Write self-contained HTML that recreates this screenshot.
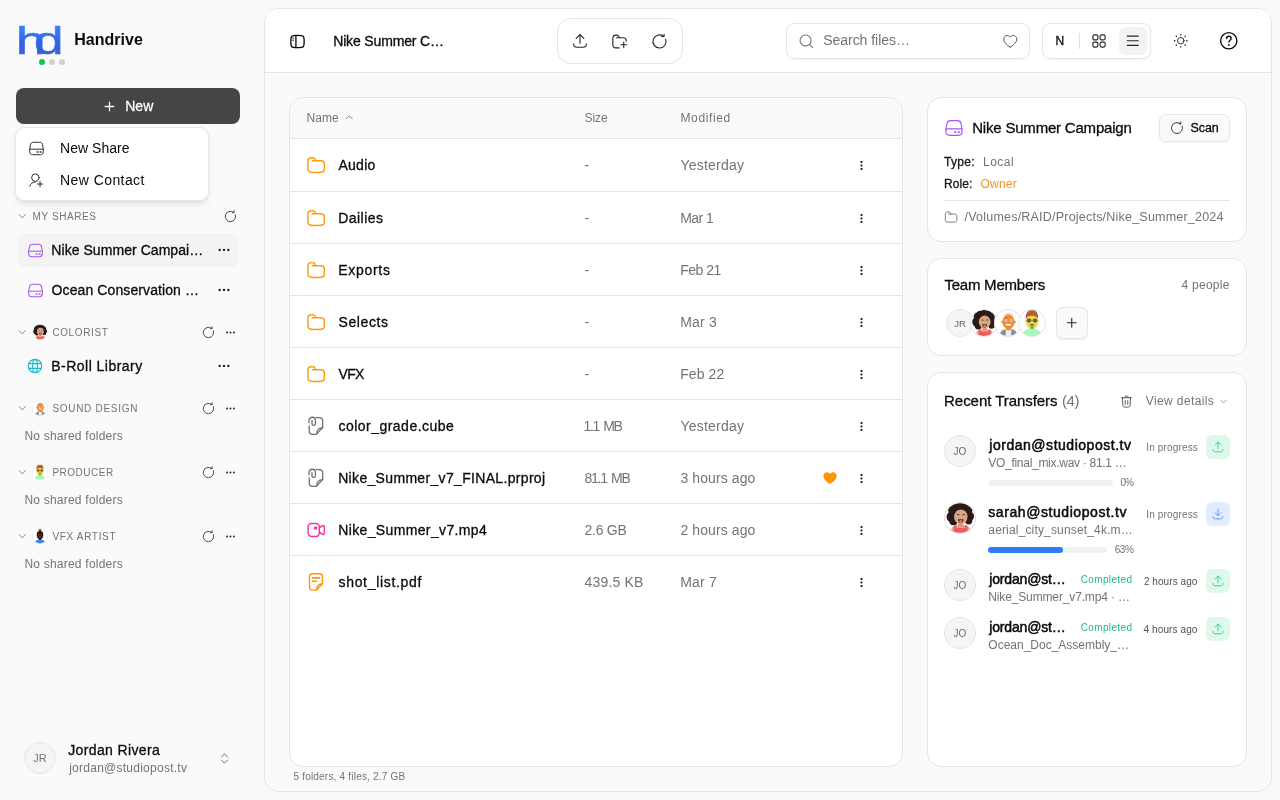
<!DOCTYPE html>
<html lang="en"><head><meta charset="utf-8"><title>Handrive</title>
<style>
*{box-sizing:border-box;margin:0;padding:0}
html,body{width:1280px;height:800px;overflow:hidden}
body{background:#fafafa;font-family:"Liberation Sans",sans-serif;color:#0a0a0a;position:relative;-webkit-font-smoothing:antialiased}
#app{position:absolute;left:0;top:0;width:1280px;height:800px;will-change:transform}
.abs{position:absolute}
.t{position:absolute;white-space:nowrap;line-height:20px;height:20px}
.m{-webkit-text-stroke:.3px currentColor}
.sb{-webkit-text-stroke:.5px currentColor}
.l{-webkit-text-stroke:.15px currentColor}
.g{color:#737373}
.card{position:absolute;background:#fff;border:1px solid #e5e5e5;border-radius:14px}
.hl{position:absolute;height:1px;background:#e5e5e5}
.circ{position:absolute;border-radius:50%;background:#f5f5f5;border:1px solid #e5e5e5;color:#737373;text-align:center}
</style></head>
<body>
<div id="app">
<header id="topbar">
<div class="abs" style="left:264px;top:8px;width:1008px;height:784px;border-radius:14px;border:1px solid #e5e5e5;background:#fafafa;overflow:hidden"><div style="height:64px;background:#fff;border-bottom:1px solid #e5e5e5"></div></div>
<svg width="17" height="17" viewBox="0 0 24 24" fill="none" stroke="#0a0a0a" stroke-width="1.85" stroke-linecap="round" stroke-linejoin="round" style="position:absolute;left:288.5px;top:32.5px;color:#0a0a0a;"><path d="M12 3.3c5.2 0 7 .2 8.1 1.3 1.1 1.1 1.3 2.9 1.3 7.4s-.2 6.3-1.3 7.4c-1.1 1.1-2.9 1.3-8.1 1.3s-7-.2-8.1-1.3C2.8 18.3 2.6 16.5 2.6 12s.2-6.3 1.3-7.4C5 3.5 6.8 3.3 12 3.3z"/><path d="M9.75 3.5v17"/><path d="M5.5 7.1h.5M5.5 10.1h.5" stroke-width="1.8"/></svg>
<span class="t m" style="top:31px;font-size:14px;left:333.2px;color:#0a0a0a;letter-spacing:-0.153px;">Nike Summer C…</span>
<div class="abs" style="left:557px;top:18px;width:126px;height:46px;border-radius:14px;border:1px solid #e5e5e5;background:#fff"></div>
<svg width="18" height="18" viewBox="0 0 24 24" fill="none" stroke="#262626" stroke-width="1.5" stroke-linecap="round" stroke-linejoin="round" style="position:absolute;left:571px;top:32.3px;color:#262626;"><path d="M12 15V3.5"/><path d="M6.8 8.6L12 3.4l5.2 5.2"/><path d="M3.5 16C3.5 19 5 20.3 8 20.3H16C19 20.3 20.5 19 20.5 16"/></svg>
<svg width="17" height="17" viewBox="0 0 24 24" fill="none" stroke="#262626" stroke-width="1.55" stroke-linecap="round" stroke-linejoin="round" style="position:absolute;left:611.2px;top:32.5px;color:#262626;"><path d="M11.5 21H7c-3 0-4.4-1.4-4.4-4.4V7.4C2.6 4.4 4 3 7 3h1.3c1 0 1.6.300 2.1 1.1l1.3 2.4"/><path d="M7.5 6.6h9.8c2.8 0 4.2 1.4 4.2 4.2v.700"/><path d="M18 12.6v8M14 16.6h8"/></svg>
<svg width="19" height="19" viewBox="0 0 24 24" fill="none" stroke="#262626" stroke-width="1.4" stroke-linecap="round" stroke-linejoin="round" style="position:absolute;left:650.3px;top:31.5px;color:#262626;"><path d="M19.8 9.16A8.3 8.3 0 1 1 17 5.35"/><path d="M17.7 2.8l.200 2.9-2.9.200"/></svg>
<div class="abs" style="left:786px;top:23px;width:244px;height:36px;border-radius:8px;border:1px solid #e5e5e5;background:#fff;box-shadow:0 1px 2px rgba(0,0,0,.04)"></div>
<svg width="16.5" height="16.5" viewBox="0 0 24 24" fill="none" stroke="#6e6e6e" stroke-width="1.5" stroke-linecap="round" stroke-linejoin="round" style="position:absolute;left:797.7px;top:32.85px;color:#6e6e6e;"><circle cx="11" cy="11" r="8"/><path d="M17 17l4.3 4.3"/></svg>
<span class="t " style="top:30px;font-size:14px;left:823.2px;color:#737373;letter-spacing:-0.029px;">Search files…</span>
<svg width="16.5" height="16.5" viewBox="0 0 24 24" fill="none" stroke="#525252" stroke-width="1.4" stroke-linecap="round" stroke-linejoin="round" style="position:absolute;left:1001.75px;top:33.05px;color:#525252;"><path d="M12 20.7C5.5 16.3 2.5 12.8 2.5 8.9 2.5 5.8 4.8 3.6 7.6 3.6c1.8 0 3.4.9 4.4 2.5 1-1.6 2.6-2.5 4.4-2.5 2.8 0 5.1 2.2 5.1 5.3 0 3.9-3 7.4-9.5 11.8z"/></svg>
<div class="abs" style="left:1042px;top:23px;width:109px;height:36px;border-radius:8px;border:1px solid #e5e5e5;background:#fff;box-shadow:0 1px 2px rgba(0,0,0,.04)"></div>
<span class="t m" style="top:31px;font-size:12px;left:1055.6px;color:#0a0a0a;letter-spacing:0.2px;">N</span>
<div class="abs" style="left:1079px;top:33px;width:1px;height:16px;background:#e0e0e0"></div>
<svg width="16" height="16" viewBox="0 0 24 24" fill="none" stroke="#262626" stroke-width="1.7" stroke-linecap="round" stroke-linejoin="round" style="position:absolute;left:1091px;top:33px;color:#262626;"><rect x="2.8" y="2.8" width="7.6" height="7.6" rx="2.3"/><rect x="13.6" y="2.8" width="7.6" height="7.6" rx="2.3"/><rect x="2.8" y="13.6" width="7.6" height="7.6" rx="2.3"/><rect x="13.6" y="13.6" width="7.6" height="7.6" rx="2.3"/></svg>
<div class="abs" style="left:1119px;top:27px;width:28px;height:28px;border-radius:6px;background:#f3f3f3"></div>
<svg width="15.5" height="15.5" viewBox="0 0 24 24" fill="none" stroke="#262626" stroke-width="1.9" stroke-linecap="round" stroke-linejoin="round" style="position:absolute;left:1125.45px;top:33.25px;color:#262626;"><path d="M3.5 5h17M3.5 12h17M3.5 19h17"/></svg>
<svg width="15.5" height="15.5" viewBox="0 0 24 24" fill="none" stroke="#262626" stroke-width="1.5" stroke-linecap="round" stroke-linejoin="round" style="position:absolute;left:1173.05px;top:33.25px;color:#262626;"><circle cx="12" cy="12" r="5"/><path d="M12 2.2v.6M12 21.2v.6M2.2 12h.6M21.2 12h.6M5 5l.4.4M18.6 18.6l.4.4M19 5l-.4.4M5.4 18.6l-.4.4" stroke-width="2"/></svg>
<svg width="19.5" height="19.5" viewBox="0 0 24 24" fill="none" stroke="#0a0a0a" stroke-width="1.7" stroke-linecap="round" stroke-linejoin="round" style="position:absolute;left:1219.15px;top:31.049999999999997px;color:#0a0a0a;"><circle cx="12" cy="12" r="10"/><path d="M9.3 9.3c0-1.6 1.2-2.8 2.8-2.8s2.8 1.1 2.8 2.6c0 2.2-2.7 2.2-2.7 4.4"/><path d="M12.1 17.2v.1" stroke-width="2.2"/></svg>
</header>
<main id="files">
<div class="card" style="left:289px;top:97px;width:614px;height:670px;border-radius:14px;overflow:hidden"><div style="height:41px;background:#fafafa;border-bottom:1px solid #e5e5e5"></div></div>
<span class="t " style="top:107.5px;font-size:12px;left:306.5px;color:#737373;letter-spacing:0.055px;">Name</span>
<svg width="10.5" height="10.5" viewBox="0 0 24 24" fill="none" stroke="#737373" stroke-width="1.9" stroke-linecap="round" stroke-linejoin="round" style="position:absolute;left:343.75px;top:112.25px;color:#737373;"><path d="M5 15.5l7-7 7 7"/></svg>
<span class="t " style="top:107.5px;font-size:12px;left:584.5px;color:#737373;letter-spacing:-0.057px;">Size</span>
<span class="t " style="top:107.5px;font-size:12px;left:680.5px;color:#737373;letter-spacing:0.617px;">Modified</span>
<div class="hl" style="left:290px;top:191px;width:612px"></div>
<svg width="20" height="20" viewBox="0 0 24 24" fill="none" stroke="#ff9a0c" stroke-width="1.7" stroke-linecap="round" stroke-linejoin="round" style="position:absolute;left:306.1px;top:155px;color:#ff9a0c;"><path d="M7.7 6.9H18C20.7 6.9 22 8.2 22 10.9V16.8C22 19.5 20.7 20.6 18 20.7 14 21 10 21 6.3 20.7 3.6 20.5 2.3 19.5 2.3 16.8V7.2C2.3 4.5 3.6 3.2 6.3 3.2H8.6C9.4 3.2 9.9 3.5 10.3 4.2L11.8 6.9"/></svg>
<span class="t m" style="top:155px;font-size:14px;left:338.5px;color:#0a0a0a;letter-spacing:0.245px;">Audio</span>
<span class="t " style="top:155px;font-size:14px;left:584.5px;color:#737373;">-</span>
<span class="t " style="top:155px;font-size:14px;left:680.5px;color:#737373;letter-spacing:0.219px;">Yesterday</span>
<svg width="13" height="13" viewBox="0 0 24 24" fill="none" stroke="#171717" stroke-width="1.5" stroke-linecap="round" stroke-linejoin="round" style="position:absolute;left:855.4px;top:158.5px;color:#171717;"><rect x="10.3" y="3.8" width="3.4" height="3.4" rx=".6" fill="currentColor" stroke="none"/><rect x="10.3" y="10.3" width="3.4" height="3.4" rx=".6" fill="currentColor" stroke="none"/><rect x="10.3" y="16.8" width="3.4" height="3.4" rx=".6" fill="currentColor" stroke="none"/></svg>
<div class="hl" style="left:290px;top:243px;width:612px"></div>
<svg width="20" height="20" viewBox="0 0 24 24" fill="none" stroke="#ff9a0c" stroke-width="1.7" stroke-linecap="round" stroke-linejoin="round" style="position:absolute;left:306.1px;top:208px;color:#ff9a0c;"><path d="M7.7 6.9H18C20.7 6.9 22 8.2 22 10.9V16.8C22 19.5 20.7 20.6 18 20.7 14 21 10 21 6.3 20.7 3.6 20.5 2.3 19.5 2.3 16.8V7.2C2.3 4.5 3.6 3.2 6.3 3.2H8.6C9.4 3.2 9.9 3.5 10.3 4.2L11.8 6.9"/></svg>
<span class="t m" style="top:208px;font-size:14px;left:338.2px;color:#0a0a0a;letter-spacing:0.464px;">Dailies</span>
<span class="t " style="top:208px;font-size:14px;left:584.5px;color:#737373;">-</span>
<span class="t " style="top:208px;font-size:14px;left:680.2px;color:#737373;letter-spacing:-0.55px;">Mar 1</span>
<svg width="13" height="13" viewBox="0 0 24 24" fill="none" stroke="#171717" stroke-width="1.5" stroke-linecap="round" stroke-linejoin="round" style="position:absolute;left:855.4px;top:211.5px;color:#171717;"><rect x="10.3" y="3.8" width="3.4" height="3.4" rx=".6" fill="currentColor" stroke="none"/><rect x="10.3" y="10.3" width="3.4" height="3.4" rx=".6" fill="currentColor" stroke="none"/><rect x="10.3" y="16.8" width="3.4" height="3.4" rx=".6" fill="currentColor" stroke="none"/></svg>
<div class="hl" style="left:290px;top:295px;width:612px"></div>
<svg width="20" height="20" viewBox="0 0 24 24" fill="none" stroke="#ff9a0c" stroke-width="1.7" stroke-linecap="round" stroke-linejoin="round" style="position:absolute;left:306.1px;top:260px;color:#ff9a0c;"><path d="M7.7 6.9H18C20.7 6.9 22 8.2 22 10.9V16.8C22 19.5 20.7 20.6 18 20.7 14 21 10 21 6.3 20.7 3.6 20.5 2.3 19.5 2.3 16.8V7.2C2.3 4.5 3.6 3.2 6.3 3.2H8.6C9.4 3.2 9.9 3.5 10.3 4.2L11.8 6.9"/></svg>
<span class="t m" style="top:260px;font-size:14px;left:338.2px;color:#0a0a0a;letter-spacing:0.723px;">Exports</span>
<span class="t " style="top:260px;font-size:14px;left:584.5px;color:#737373;">-</span>
<span class="t " style="top:260px;font-size:14px;left:680.2px;color:#737373;letter-spacing:-0.5px;">Feb 21</span>
<svg width="13" height="13" viewBox="0 0 24 24" fill="none" stroke="#171717" stroke-width="1.5" stroke-linecap="round" stroke-linejoin="round" style="position:absolute;left:855.4px;top:263.5px;color:#171717;"><rect x="10.3" y="3.8" width="3.4" height="3.4" rx=".6" fill="currentColor" stroke="none"/><rect x="10.3" y="10.3" width="3.4" height="3.4" rx=".6" fill="currentColor" stroke="none"/><rect x="10.3" y="16.8" width="3.4" height="3.4" rx=".6" fill="currentColor" stroke="none"/></svg>
<div class="hl" style="left:290px;top:347px;width:612px"></div>
<svg width="20" height="20" viewBox="0 0 24 24" fill="none" stroke="#ff9a0c" stroke-width="1.7" stroke-linecap="round" stroke-linejoin="round" style="position:absolute;left:306.1px;top:312px;color:#ff9a0c;"><path d="M7.7 6.9H18C20.7 6.9 22 8.2 22 10.9V16.8C22 19.5 20.7 20.6 18 20.7 14 21 10 21 6.3 20.7 3.6 20.5 2.3 19.5 2.3 16.8V7.2C2.3 4.5 3.6 3.2 6.3 3.2H8.6C9.4 3.2 9.9 3.5 10.3 4.2L11.8 6.9"/></svg>
<span class="t m" style="top:312px;font-size:14px;left:338.5px;color:#0a0a0a;letter-spacing:0.598px;">Selects</span>
<span class="t " style="top:312px;font-size:14px;left:584.5px;color:#737373;">-</span>
<span class="t " style="top:312px;font-size:14px;left:680.2px;color:#737373;letter-spacing:0.2px;">Mar 3</span>
<svg width="13" height="13" viewBox="0 0 24 24" fill="none" stroke="#171717" stroke-width="1.5" stroke-linecap="round" stroke-linejoin="round" style="position:absolute;left:855.4px;top:315.5px;color:#171717;"><rect x="10.3" y="3.8" width="3.4" height="3.4" rx=".6" fill="currentColor" stroke="none"/><rect x="10.3" y="10.3" width="3.4" height="3.4" rx=".6" fill="currentColor" stroke="none"/><rect x="10.3" y="16.8" width="3.4" height="3.4" rx=".6" fill="currentColor" stroke="none"/></svg>
<div class="hl" style="left:290px;top:399px;width:612px"></div>
<svg width="20" height="20" viewBox="0 0 24 24" fill="none" stroke="#ff9a0c" stroke-width="1.7" stroke-linecap="round" stroke-linejoin="round" style="position:absolute;left:306.1px;top:364px;color:#ff9a0c;"><path d="M7.7 6.9H18C20.7 6.9 22 8.2 22 10.9V16.8C22 19.5 20.7 20.6 18 20.7 14 21 10 21 6.3 20.7 3.6 20.5 2.3 19.5 2.3 16.8V7.2C2.3 4.5 3.6 3.2 6.3 3.2H8.6C9.4 3.2 9.9 3.5 10.3 4.2L11.8 6.9"/></svg>
<span class="t m" style="top:364px;font-size:14px;left:338.5px;color:#0a0a0a;letter-spacing:-0.695px;">VFX</span>
<span class="t " style="top:364px;font-size:14px;left:584.5px;color:#737373;">-</span>
<span class="t " style="top:364px;font-size:14px;left:680.2px;color:#737373;letter-spacing:0.1px;">Feb 22</span>
<svg width="13" height="13" viewBox="0 0 24 24" fill="none" stroke="#171717" stroke-width="1.5" stroke-linecap="round" stroke-linejoin="round" style="position:absolute;left:855.4px;top:367.5px;color:#171717;"><rect x="10.3" y="3.8" width="3.4" height="3.4" rx=".6" fill="currentColor" stroke="none"/><rect x="10.3" y="10.3" width="3.4" height="3.4" rx=".6" fill="currentColor" stroke="none"/><rect x="10.3" y="16.8" width="3.4" height="3.4" rx=".6" fill="currentColor" stroke="none"/></svg>
<div class="hl" style="left:290px;top:451px;width:612px"></div>
<svg width="20" height="20" viewBox="0 0 24 24" fill="none" stroke="#6e6e6e" stroke-width="1.55" stroke-linecap="round" stroke-linejoin="round" style="position:absolute;left:306px;top:416px;color:#6e6e6e;"><path d="M12.5 1.9H16C18.7 1.9 20 3.2 20 5.9V13.9L12.9 21.5C12.6 21.8 12.2 22 11.6 22H7.8C5.2 22 3.9 20.7 3.9 18.1V12"/><path d="M20 14C15.5 14.3 13 16 12.9 21.5"/><path d="M3.6 8.2V5.3C3.6 2.9 5.2 1.5 7.45 1.5S11.3 2.9 11.3 5.3V9.2C11.3 10.5 10.5 11.3 9.25 11.3S7.2 10.5 7.2 9.2V5.3"/></svg>
<span class="t m" style="top:416px;font-size:14px;left:338.5px;color:#0a0a0a;letter-spacing:0.473px;">color_grade.cube</span>
<span class="t " style="top:416px;font-size:14px;left:583.5px;color:#737373;letter-spacing:-1.363px;word-spacing:1.8px;">1.1 MB</span>
<span class="t " style="top:416px;font-size:14px;left:680.5px;color:#737373;letter-spacing:0.219px;">Yesterday</span>
<svg width="13" height="13" viewBox="0 0 24 24" fill="none" stroke="#171717" stroke-width="1.5" stroke-linecap="round" stroke-linejoin="round" style="position:absolute;left:855.4px;top:419.5px;color:#171717;"><rect x="10.3" y="3.8" width="3.4" height="3.4" rx=".6" fill="currentColor" stroke="none"/><rect x="10.3" y="10.3" width="3.4" height="3.4" rx=".6" fill="currentColor" stroke="none"/><rect x="10.3" y="16.8" width="3.4" height="3.4" rx=".6" fill="currentColor" stroke="none"/></svg>
<div class="hl" style="left:290px;top:503px;width:612px"></div>
<svg width="20" height="20" viewBox="0 0 24 24" fill="none" stroke="#6e6e6e" stroke-width="1.55" stroke-linecap="round" stroke-linejoin="round" style="position:absolute;left:306px;top:468px;color:#6e6e6e;"><path d="M12.5 1.9H16C18.7 1.9 20 3.2 20 5.9V13.9L12.9 21.5C12.6 21.8 12.2 22 11.6 22H7.8C5.2 22 3.9 20.7 3.9 18.1V12"/><path d="M20 14C15.5 14.3 13 16 12.9 21.5"/><path d="M3.6 8.2V5.3C3.6 2.9 5.2 1.5 7.45 1.5S11.3 2.9 11.3 5.3V9.2C11.3 10.5 10.5 11.3 9.25 11.3S7.2 10.5 7.2 9.2V5.3"/></svg>
<span class="t m" style="top:468px;font-size:14px;left:338.2px;color:#0a0a0a;letter-spacing:0.327px;">Nike_Summer_v7_FINAL.prproj</span>
<span class="t " style="top:468px;font-size:14px;left:584.5px;color:#737373;letter-spacing:-1.267px;word-spacing:1.8px;">81.1 MB</span>
<span class="t " style="top:468px;font-size:14px;left:680.5px;color:#737373;letter-spacing:0.084px;">3 hours ago</span>
<svg width="16" height="16" viewBox="0 0 24 24" fill="#ff9500" stroke="#ff9500" stroke-width="0" stroke-linecap="round" stroke-linejoin="round" style="position:absolute;left:821.8px;top:470px;color:#ff9500;"><path d="M12 21C5.5 16.6 2 12.9 2 8.9 2 5.6 4.5 3.2 7.5 3.2c1.8 0 3.4.9 4.5 2.5 1.1-1.6 2.7-2.5 4.5-2.5 3 0 5.5 2.4 5.5 5.7 0 4-3.5 7.7-10 12.1z" stroke="none"/></svg>
<svg width="13" height="13" viewBox="0 0 24 24" fill="none" stroke="#171717" stroke-width="1.5" stroke-linecap="round" stroke-linejoin="round" style="position:absolute;left:855.4px;top:471.5px;color:#171717;"><rect x="10.3" y="3.8" width="3.4" height="3.4" rx=".6" fill="currentColor" stroke="none"/><rect x="10.3" y="10.3" width="3.4" height="3.4" rx=".6" fill="currentColor" stroke="none"/><rect x="10.3" y="16.8" width="3.4" height="3.4" rx=".6" fill="currentColor" stroke="none"/></svg>
<div class="hl" style="left:290px;top:555px;width:612px"></div>
<svg width="20" height="20" viewBox="0 0 24 24" fill="none" stroke="#f5339f" stroke-width="1.7" stroke-linecap="round" stroke-linejoin="round" style="position:absolute;left:306px;top:520px;color:#f5339f;"><rect x="2.5" y="4.2" width="13.5" height="15.6" rx="4.2"/><path d="M16 9.4L19.3 7C20.8 6 22 6.6 22 8.4V15.6C22 17.4 20.8 18 19.3 17L16 14.6"/><circle cx="11.5" cy="9.6" r="1.3"/></svg>
<span class="t m" style="top:520px;font-size:14px;left:338.2px;color:#0a0a0a;letter-spacing:0.365px;">Nike_Summer_v7.mp4</span>
<span class="t " style="top:520px;font-size:14px;left:584.5px;color:#737373;letter-spacing:-0.248px;">2.6 GB</span>
<span class="t " style="top:520px;font-size:14px;left:680.5px;color:#737373;letter-spacing:0.084px;">2 hours ago</span>
<svg width="13" height="13" viewBox="0 0 24 24" fill="none" stroke="#171717" stroke-width="1.5" stroke-linecap="round" stroke-linejoin="round" style="position:absolute;left:855.4px;top:523.5px;color:#171717;"><rect x="10.3" y="3.8" width="3.4" height="3.4" rx=".6" fill="currentColor" stroke="none"/><rect x="10.3" y="10.3" width="3.4" height="3.4" rx=".6" fill="currentColor" stroke="none"/><rect x="10.3" y="16.8" width="3.4" height="3.4" rx=".6" fill="currentColor" stroke="none"/></svg>
<svg width="20" height="20" viewBox="0 0 24 24" fill="none" stroke="#ff960a" stroke-width="1.7" stroke-linecap="round" stroke-linejoin="round" style="position:absolute;left:306px;top:572px;color:#ff960a;"><path d="M8.2 2H15.8C18.5 2 19.8 3.3 19.8 6V14L12.8 21.3C12.5 21.6 12.1 21.7 11.5 21.7H8.2C5.5 21.7 4.2 20.4 4.2 17.7V6C4.2 3.3 5.5 2 8.2 2Z"/><path d="M19.8 14.1C15.5 14.4 12.9 16 12.8 21.4"/><path d="M7.6 7H16.4M7.6 11H12.8" stroke-width="1.9"/></svg>
<span class="t m" style="top:572px;font-size:14px;left:338.5px;color:#0a0a0a;letter-spacing:0.682px;">shot_list.pdf</span>
<span class="t " style="top:572px;font-size:14px;left:584.5px;color:#737373;letter-spacing:0.177px;">439.5 KB</span>
<span class="t " style="top:572px;font-size:14px;left:680.2px;color:#737373;letter-spacing:0.2px;">Mar 7</span>
<svg width="13" height="13" viewBox="0 0 24 24" fill="none" stroke="#171717" stroke-width="1.5" stroke-linecap="round" stroke-linejoin="round" style="position:absolute;left:855.4px;top:575.5px;color:#171717;"><rect x="10.3" y="3.8" width="3.4" height="3.4" rx=".6" fill="currentColor" stroke="none"/><rect x="10.3" y="10.3" width="3.4" height="3.4" rx=".6" fill="currentColor" stroke="none"/><rect x="10.3" y="16.8" width="3.4" height="3.4" rx=".6" fill="currentColor" stroke="none"/></svg>
<span class="t " style="top:766.5px;font-size:10px;left:293.4px;color:#737373;letter-spacing:0.206px;">5 folders, 4 files, 2.7 GB</span>
</main>
<section id="details">
<div class="card" style="left:927px;top:97px;width:320px;height:145px"></div>
<svg width="20" height="20" viewBox="0 0 24 24" fill="none" stroke="#a855f7" stroke-width="1.4" stroke-linecap="round" stroke-linejoin="round" style="position:absolute;left:943.7px;top:118px;color:#a855f7;"><path d="M2.4 13L3.5 6.8C4 4.3 5.4 3.2 7.8 3.2H16.2C18.6 3.2 20 4.3 20.5 6.8L21.6 13V16.6C21.6 19.4 20.2 20.8 17.4 20.8H6.6C3.8 20.8 2.4 19.4 2.4 16.6Z"/><path d="M2.4 13H21.6"/><path d="M12.9 16.9h1.2M17.2 16.9h1.2" stroke-width="1.9"/></svg>
<span class="t m" style="top:118px;font-size:15px;left:972.2px;color:#0a0a0a;letter-spacing:-0.197px;">Nike Summer Campaign</span>
<div class="abs" style="left:1159px;top:114px;width:71px;height:28px;border-radius:7px;border:1px solid #e5e5e5;background:#fafafa;box-shadow:0 1px 2px rgba(0,0,0,.05)"></div>
<svg width="16" height="16" viewBox="0 0 24 24" fill="none" stroke="#262626" stroke-width="1.35" stroke-linecap="round" stroke-linejoin="round" style="position:absolute;left:1168.7px;top:120px;color:#262626;"><path d="M19.8 9.16A8.3 8.3 0 1 1 17 5.35"/><path d="M17.7 2.8l.200 2.9-2.9.200"/></svg>
<span class="t m" style="top:118px;font-size:12.5px;left:1190.5px;color:#0a0a0a;letter-spacing:-0.096px;">Scan</span>
<span class="t m" style="top:152px;font-size:12px;left:944px;color:#171717;letter-spacing:0.309px;">Type:</span>
<span class="t " style="top:152px;font-size:12px;left:983px;color:#737373;letter-spacing:0.495px;">Local</span>
<span class="t m" style="top:174px;font-size:12px;left:944px;color:#171717;letter-spacing:0.08px;">Role:</span>
<span class="t " style="top:174px;font-size:12px;left:980.5px;color:#f7931a;letter-spacing:0.226px;">Owner</span>
<div class="hl" style="left:944px;top:200px;width:286px"></div>
<svg width="14" height="14" viewBox="0 0 24 24" fill="none" stroke="#737373" stroke-width="1.6" stroke-linecap="round" stroke-linejoin="round" style="position:absolute;left:944px;top:210px;color:#737373;"><path d="M7.7 6.9H18C20.7 6.9 22 8.2 22 10.9V16.8C22 19.5 20.7 20.6 18 20.7 14 21 10 21 6.3 20.7 3.6 20.5 2.3 19.5 2.3 16.8V7.2C2.3 4.5 3.6 3.2 6.3 3.2H8.6C9.4 3.2 9.9 3.5 10.3 4.2L11.8 6.9"/></svg>
<span class="t " style="top:207px;font-size:12.5px;left:964.5px;color:#737373;letter-spacing:0.215px;">/Volumes/RAID/Projects/Nike_Summer_2024</span>
<div class="card" style="left:927px;top:258px;width:320px;height:98px"></div>
<span class="t m" style="top:275px;font-size:15px;left:944.4px;color:#0a0a0a;letter-spacing:-0.224px;">Team Members</span>
<span class="t " style="top:275px;font-size:12px;left:1181.6px;color:#737373;letter-spacing:0.247px;">4 people</span>
<div class="circ" style="left:946px;top:309px;width:28px;height:28px;font-size:9.5px;line-height:27.5px;color:#666">JR</div>
<svg width="28" height="28" viewBox="0 0 28 28" style="position:absolute;left:970px;top:309px;"><defs><clipPath id="ta1"><circle cx="14" cy="14" r="13.2"/></clipPath></defs><circle cx="14" cy="14" r="14" fill="#ffffff"/><g clip-path="url(#ta1)"><rect width="28" height="28" fill="#ffffff"/><circle cx="9.5" cy="7.5" r="5.8" fill="#2a1a1a"/><circle cx="19" cy="7.5" r="5.8" fill="#2a1a1a"/><circle cx="14.5" cy="5.8" r="5.5" fill="#2a1a1a"/><circle cx="7" cy="13" r="4.8" fill="#2a1a1a"/><circle cx="22" cy="12.5" r="4.3" fill="#2a1a1a"/><circle cx="8.3" cy="16.8" r="3.6" fill="#2a1a1a"/><circle cx="21.6" cy="16.5" r="3.2" fill="#2a1a1a"/><rect x="12.3" y="17" width="4.6" height="5" fill="#cf9a76"/><path d="M5.5 28c0-5 2.5-7.2 5.5-7.8l3.6 1.3 3.6-1.3c3 .6 5.5 2.8 5.5 7.8z" fill="#dca983"/><path d="M8.6 28v-7l1.8-.8.9 2.6h6.6l.9-2.6 1.8.8v7z" fill="#f4595f"/><ellipse cx="14.7" cy="13" rx="5.9" ry="6.5" fill="#dba67f"/><path d="M11.3 11.3q1.1-.9 2.2 0M16.2 11.3q1.1-.9 2.2 0" stroke="#3a2620" stroke-width=".8" fill="none"/><circle cx="11.4" cy="12.9" r=".8" fill="#8fc7ea"/><path d="M12.3 15.2h4.8c0 2-1 3.2-2.4 3.2s-2.4-1.2-2.4-3.2z" fill="#4a2520"/><ellipse cx="14.7" cy="17" rx="1.4" ry="1.5" fill="#f0607a"/></g><circle cx="14" cy="14" r="13.5" fill="none" stroke="#e2e2e2" stroke-width="1"/></svg>
<svg width="28" height="28" viewBox="0 0 28 28" style="position:absolute;left:993.5px;top:309px;"><defs><clipPath id="ta2"><circle cx="14" cy="14" r="13.2"/></clipPath></defs><circle cx="14" cy="14" r="14" fill="#ffffff"/><g clip-path="url(#ta2)"><rect width="28" height="28" fill="#ffffff"/><ellipse cx="14.5" cy="6.6" rx="4.6" ry="3.2" fill="#e3e3e3"/><rect x="12" y="17" width="5" height="5" fill="#ef8424"/><path d="M5.5 28c0-5 2.5-7.2 5.8-7.7l3.2.7 3.2-.7c3.3.5 5.8 2.7 5.8 7.7z" fill="#8e8e8e"/><path d="M11.8 20.6l2.7.7 2.7-.7V28h-5.4z" fill="#ededed"/><ellipse cx="14.5" cy="12.8" rx="6" ry="7.3" fill="#f88b2d"/><circle cx="8.5" cy="13" r="1.3" fill="#f88b2d"/><circle cx="20.5" cy="13" r="1.3" fill="#f88b2d"/><path d="M10.3 9.4q1.3-.9 2.6-.2" stroke="#b55a12" stroke-width=".8" fill="none"/><circle cx="12" cy="11.6" r="1.25" fill="#fff"/><circle cx="17" cy="11.6" r="1.25" fill="#fff"/><circle cx="12.1" cy="11.7" r=".6" fill="#3d6fa8"/><circle cx="16.9" cy="11.7" r=".6" fill="#3d6fa8"/><rect x="11.4" y="14.6" width="6.2" height="2.3" rx="1.1" fill="#fff" stroke="#c2600f" stroke-width=".45"/></g><circle cx="14" cy="14" r="13.5" fill="none" stroke="#e2e2e2" stroke-width="1"/></svg>
<svg width="28" height="28" viewBox="0 0 28 28" style="position:absolute;left:1018px;top:309px;"><defs><clipPath id="ta3"><circle cx="14" cy="14" r="13.2"/></clipPath></defs><circle cx="14" cy="14" r="14" fill="#ffffff"/><g clip-path="url(#ta3)"><rect width="28" height="28" fill="#ffffff"/><rect x="11.6" y="16" width="4.8" height="7" fill="#ecc93a"/><path d="M4.5 28c0-5 2.6-7.4 6.5-7.9h6c3.9.5 6.5 2.9 6.5 7.9z" fill="#a5f7c0"/><ellipse cx="14" cy="13" rx="6" ry="7" fill="#f5d44a"/><circle cx="7.9" cy="12.5" r="1.1" fill="#f5d44a"/><circle cx="20.1" cy="12.5" r="1.1" fill="#f5d44a"/><path d="M7.9 10.5C7 4.2 9.8 1 14 1s7 3.2 5.8 9.5c-.7-2.6-2.5-3.7-5.8-3.7s-5.2 1-6.1 3.7z" fill="#b5612c"/><circle cx="11" cy="11.5" r="2.1" fill="#5a5230"/><circle cx="17" cy="11.5" r="2.1" fill="#5a5230"/><path d="M8 11.2h12" stroke="#8a7a38" stroke-width=".6"/><path d="M12.3 15.3h3.4v.9h-3.4z" fill="#3a2a14"/><rect x="12.5" y="15.9" width="3" height="4.3" rx="1.4" fill="#58b85c"/></g><circle cx="14" cy="14" r="13.5" fill="none" stroke="#e2e2e2" stroke-width="1"/></svg>
<div class="abs" style="left:1056px;top:307px;width:32px;height:32px;border-radius:7px;border:1px solid #e5e5e5;background:#fafafa;box-shadow:0 1px 2px rgba(0,0,0,.06)"></div>
<svg width="13.5" height="13.5" viewBox="0 0 24 24" fill="none" stroke="#262626" stroke-width="1.95" stroke-linecap="round" stroke-linejoin="round" style="position:absolute;left:1065.25px;top:316.25px;color:#262626;"><path d="M12 4v16M4 12h16"/></svg>
<div class="card" style="left:927px;top:372px;width:320px;height:395px"></div>
<span class="t m" style="top:391px;font-size:15px;left:944.1px;color:#0a0a0a;letter-spacing:-0.052px;">Recent Transfers</span>
<span class="t " style="top:391px;font-size:15px;left:1062px;color:#737373;letter-spacing:-0.469px;">(4)</span>
<svg width="15" height="15" viewBox="0 0 24 24" fill="none" stroke="#525252" stroke-width="1.5" stroke-linecap="round" stroke-linejoin="round" style="position:absolute;left:1118.5px;top:393.5px;color:#525252;"><path d="M4 6h16M9.2 6l.5-1.7c.2-.8.7-1.1 1.4-1.1h1.8c.7 0 1.2.3 1.4 1.1l.5 1.7"/><path d="M5.5 6l.7 11.5c.2 2.4 1.3 3.5 3.7 3.5h4.2c2.4 0 3.5-1.1 3.7-3.5L18.5 6"/><path d="M10 10.5v6M14 10.5v6"/></svg>
<span class="t " style="top:391px;font-size:12px;left:1145.8px;color:#737373;letter-spacing:0.381px;">View details</span>
<svg width="9" height="9" viewBox="0 0 24 24" fill="none" stroke="#737373" stroke-width="1.8" stroke-linecap="round" stroke-linejoin="round" style="position:absolute;left:1219px;top:397px;color:#737373;"><path d="M5 8.5l7 7 7-7"/></svg>
<div class="circ" style="left:944px;top:435px;width:32px;height:32px;font-size:10px;line-height:31px;color:#6b6b6b">JO</div>
<span class="t sb" style="top:435px;font-size:14px;left:989.3px;color:#0a0a0a;letter-spacing:0.525px;">jordan@studiopost.tv</span>
<span class="t " style="top:453px;font-size:12px;left:988.3px;color:#737373;letter-spacing:-0.287px;">VO_final_mix.wav · 81.1 …</span>
<div class="abs" style="left:988px;top:480px;width:125px;height:6px;border-radius:3px;background:#f1f1f1"></div><span class="t " style="top:472.5px;font-size:10px;left:1120.5px;color:#737373;letter-spacing:-1.062px;">0%</span>
<span class="t " style="top:437.5px;font-size:10px;left:1146.3px;color:#737373;letter-spacing:0.148px;">In progress</span>
<div class="abs" style="left:1206px;top:435px;width:24px;height:24px;border-radius:6px;background:#def9ec"></div><svg width="14" height="14" viewBox="0 0 24 24" fill="none" stroke="#2cc48d" stroke-width="1.45" stroke-linecap="round" stroke-linejoin="round" style="position:absolute;left:1211px;top:440px;color:#2cc48d;"><path d="M12 15V3.5"/><path d="M6.8 8.6L12 3.4l5.2 5.2"/><path d="M3.5 16C3.5 19 5 20.3 8 20.3H16C19 20.3 20.5 19 20.5 16"/></svg>
<svg width="32" height="32" viewBox="0 0 28 28" style="position:absolute;left:944px;top:502px;"><defs><clipPath id="tr2"><circle cx="14" cy="14" r="13.2"/></clipPath></defs><circle cx="14" cy="14" r="14" fill="#ffffff"/><g clip-path="url(#tr2)"><rect width="28" height="28" fill="#ffffff"/><circle cx="9.5" cy="7.5" r="5.8" fill="#2a1a1a"/><circle cx="19" cy="7.5" r="5.8" fill="#2a1a1a"/><circle cx="14.5" cy="5.8" r="5.5" fill="#2a1a1a"/><circle cx="7" cy="13" r="4.8" fill="#2a1a1a"/><circle cx="22" cy="12.5" r="4.3" fill="#2a1a1a"/><circle cx="8.3" cy="16.8" r="3.6" fill="#2a1a1a"/><circle cx="21.6" cy="16.5" r="3.2" fill="#2a1a1a"/><rect x="12.3" y="17" width="4.6" height="5" fill="#cf9a76"/><path d="M5.5 28c0-5 2.5-7.2 5.5-7.8l3.6 1.3 3.6-1.3c3 .6 5.5 2.8 5.5 7.8z" fill="#dca983"/><path d="M8.6 28v-7l1.8-.8.9 2.6h6.6l.9-2.6 1.8.8v7z" fill="#f4595f"/><ellipse cx="14.7" cy="13" rx="5.9" ry="6.5" fill="#dba67f"/><path d="M11.3 11.3q1.1-.9 2.2 0M16.2 11.3q1.1-.9 2.2 0" stroke="#3a2620" stroke-width=".8" fill="none"/><circle cx="11.4" cy="12.9" r=".8" fill="#8fc7ea"/><path d="M12.3 15.2h4.8c0 2-1 3.2-2.4 3.2s-2.4-1.2-2.4-3.2z" fill="#4a2520"/><ellipse cx="14.7" cy="17" rx="1.4" ry="1.5" fill="#f0607a"/></g><circle cx="14" cy="14" r="13.5" fill="none" stroke="#e2e2e2" stroke-width="1"/></svg>
<span class="t sb" style="top:502px;font-size:14px;left:988.3px;color:#0a0a0a;letter-spacing:0.57px;">sarah@studiopost.tv</span>
<span class="t " style="top:520px;font-size:12px;left:988.3px;color:#737373;letter-spacing:0.16px;">aerial_city_sunset_4k.m…</span>
<div class="abs" style="left:988px;top:547px;width:119px;height:6px;border-radius:3px;background:#f1f1f1"><div style="width:63%;height:6px;border-radius:3px;background:#2f7bf6"></div></div><span class="t " style="top:539.5px;font-size:10px;left:1114.7px;color:#737373;letter-spacing:-0.412px;">63%</span>
<span class="t " style="top:504.5px;font-size:10px;left:1146.3px;color:#737373;letter-spacing:0.148px;">In progress</span>
<div class="abs" style="left:1206px;top:502px;width:24px;height:24px;border-radius:6px;background:#e1ecff"></div><svg width="14" height="14" viewBox="0 0 24 24" fill="none" stroke="#4a8af7" stroke-width="1.45" stroke-linecap="round" stroke-linejoin="round" style="position:absolute;left:1211px;top:507px;color:#4a8af7;"><path d="M12 3.5V15"/><path d="M6.8 9.8L12 15l5.2-5.2"/><path d="M3.5 16C3.5 19 5 20.3 8 20.3H16C19 20.3 20.5 19 20.5 16"/></svg>
<div class="circ" style="left:944px;top:569px;width:32px;height:32px;font-size:10px;line-height:31px;color:#6b6b6b">JO</div>
<span class="t sb" style="top:569px;font-size:14px;left:989.3px;color:#0a0a0a;letter-spacing:-0.169px;">jordan@st…</span>
<span class="t " style="top:569.5px;font-size:10px;left:1080.7px;color:#16bd85;letter-spacing:0.363px;">Completed</span>
<span class="t " style="top:571.5px;font-size:10px;left:1143.9px;color:#525252;letter-spacing:0.064px;">2 hours ago</span>
<span class="t " style="top:587px;font-size:12px;left:988.3px;color:#737373;letter-spacing:-0.143px;">Nike_Summer_v7.mp4 · …</span>
<div class="abs" style="left:1206px;top:569px;width:24px;height:24px;border-radius:6px;background:#def9ec"></div><svg width="14" height="14" viewBox="0 0 24 24" fill="none" stroke="#2cc48d" stroke-width="1.45" stroke-linecap="round" stroke-linejoin="round" style="position:absolute;left:1211px;top:574px;color:#2cc48d;"><path d="M12 15V3.5"/><path d="M6.8 8.6L12 3.4l5.2 5.2"/><path d="M3.5 16C3.5 19 5 20.3 8 20.3H16C19 20.3 20.5 19 20.5 16"/></svg>
<div class="circ" style="left:944px;top:617px;width:32px;height:32px;font-size:10px;line-height:31px;color:#6b6b6b">JO</div>
<span class="t sb" style="top:617px;font-size:14px;left:989.3px;color:#0a0a0a;letter-spacing:-0.169px;">jordan@st…</span>
<span class="t " style="top:617.5px;font-size:10px;left:1080.7px;color:#16bd85;letter-spacing:0.363px;">Completed</span>
<span class="t " style="top:619.5px;font-size:10px;left:1143.6px;color:#525252;letter-spacing:0.094px;">4 hours ago</span>
<span class="t " style="top:635px;font-size:12px;left:988.3px;color:#737373;letter-spacing:-0.002px;">Ocean_Doc_Assembly_…</span>
<div class="abs" style="left:1206px;top:617px;width:24px;height:24px;border-radius:6px;background:#def9ec"></div><svg width="14" height="14" viewBox="0 0 24 24" fill="none" stroke="#2cc48d" stroke-width="1.45" stroke-linecap="round" stroke-linejoin="round" style="position:absolute;left:1211px;top:622px;color:#2cc48d;"><path d="M12 15V3.5"/><path d="M6.8 8.6L12 3.4l5.2 5.2"/><path d="M3.5 16C3.5 19 5 20.3 8 20.3H16C19 20.3 20.5 19 20.5 16"/></svg>
</section>
<aside id="sidebar">
<div class="abs" style="left:16px;top:17px;font-size:39px;line-height:48px;letter-spacing:-8.5px;padding-right:12px;transform-origin:0 0;transform:scaleX(1.36);-webkit-text-stroke:.6px transparent;background:linear-gradient(180deg,#3b7df7 22%,#2d62e6 55%,#4166c6 88%);-webkit-background-clip:text;background-clip:text;color:transparent;">hd</div>
<div class="abs" style="left:39px;top:59px;width:6px;height:6px;border-radius:50%;background:#0cc84f"></div>
<div class="abs" style="left:49px;top:59px;width:6px;height:6px;border-radius:50%;background:#d1d1d1"></div>
<div class="abs" style="left:59px;top:59px;width:6px;height:6px;border-radius:50%;background:#d1d1d1"></div>
<span class="t " style="top:29.5px;font-size:16px;left:74.2px;letter-spacing:0.033px;font-weight:bold;">Handrive</span>
<div class="abs" style="left:16px;top:88px;width:224px;height:36px;border-radius:8px;background:#454545"></div>
<svg width="13" height="13" viewBox="0 0 24 24" fill="none" stroke="#f5f5f5" stroke-width="2.4" stroke-linecap="round" stroke-linejoin="round" style="position:absolute;left:102.8px;top:99.5px;color:#f5f5f5;"><path d="M12 4v16M4 12h16"/></svg>
<span class="t m" style="top:96px;font-size:14px;left:125.2px;color:#fafafa;letter-spacing:0.077px;">New</span>
<svg width="10.5" height="10.5" viewBox="0 0 24 24" fill="none" stroke="#6b6b6b" stroke-width="1.8" stroke-linecap="round" stroke-linejoin="round" style="position:absolute;left:16.75px;top:210.75px;color:#6b6b6b;"><path d="M5 8.5l7 7 7-7"/></svg>
<span class="t " style="top:207px;font-size:10px;left:32.5px;color:#737373;letter-spacing:0.596px;">MY SHARES</span>
<svg width="15" height="15" viewBox="0 0 24 24" fill="none" stroke="#404040" stroke-width="1.5" stroke-linecap="round" stroke-linejoin="round" style="position:absolute;left:222.5px;top:208.5px;color:#404040;"><path d="M19.8 9.16A8.3 8.3 0 1 1 17 5.35"/><path d="M17.7 2.8l.200 2.9-2.9.200"/></svg>
<div class="abs" style="left:17px;top:233px;width:222px;height:34px;border-radius:8px;background:#f3f3f3"></div>
<svg width="17" height="17" viewBox="0 0 24 24" fill="none" stroke="#a855f7" stroke-width="1.5" stroke-linecap="round" stroke-linejoin="round" style="position:absolute;left:26.5px;top:241.5px;color:#a855f7;"><path d="M2.4 13L3.5 6.8C4 4.3 5.4 3.2 7.8 3.2H16.2C18.6 3.2 20 4.3 20.5 6.8L21.6 13V16.6C21.6 19.4 20.2 20.8 17.4 20.8H6.6C3.8 20.8 2.4 19.4 2.4 16.6Z"/><path d="M2.4 13H21.6"/><path d="M12.9 16.9h1.2M17.2 16.9h1.2" stroke-width="1.9"/></svg>
<span class="t m" style="top:240px;font-size:14px;left:51.3px;color:#0a0a0a;letter-spacing:0.054px;">Nike Summer Campai…</span>
<svg width="14" height="14" viewBox="0 0 24 24" fill="none" stroke="#171717" stroke-width="1.5" stroke-linecap="round" stroke-linejoin="round" style="position:absolute;left:217px;top:243px;color:#171717;"><circle cx="4.5" cy="12" r="2" fill="currentColor" stroke="none"/><circle cx="12" cy="12" r="2" fill="currentColor" stroke="none"/><circle cx="19.5" cy="12" r="2" fill="currentColor" stroke="none"/></svg>
<svg width="17" height="17" viewBox="0 0 24 24" fill="none" stroke="#a855f7" stroke-width="1.5" stroke-linecap="round" stroke-linejoin="round" style="position:absolute;left:26.5px;top:281.5px;color:#a855f7;"><path d="M2.4 13L3.5 6.8C4 4.3 5.4 3.2 7.8 3.2H16.2C18.6 3.2 20 4.3 20.5 6.8L21.6 13V16.6C21.6 19.4 20.2 20.8 17.4 20.8H6.6C3.8 20.8 2.4 19.4 2.4 16.6Z"/><path d="M2.4 13H21.6"/><path d="M12.9 16.9h1.2M17.2 16.9h1.2" stroke-width="1.9"/></svg>
<span class="t m" style="top:280px;font-size:14px;left:51.6px;color:#0a0a0a;letter-spacing:0.099px;">Ocean Conservation …</span>
<svg width="14" height="14" viewBox="0 0 24 24" fill="none" stroke="#171717" stroke-width="1.5" stroke-linecap="round" stroke-linejoin="round" style="position:absolute;left:217px;top:283px;color:#171717;"><circle cx="4.5" cy="12" r="2" fill="currentColor" stroke="none"/><circle cx="12" cy="12" r="2" fill="currentColor" stroke="none"/><circle cx="19.5" cy="12" r="2" fill="currentColor" stroke="none"/></svg>
<svg width="10.5" height="10.5" viewBox="0 0 24 24" fill="none" stroke="#6b6b6b" stroke-width="1.8" stroke-linecap="round" stroke-linejoin="round" style="position:absolute;left:16.75px;top:326.75px;color:#6b6b6b;"><path d="M5 8.5l7 7 7-7"/></svg><svg width="16" height="16" viewBox="0 0 28 28" style="position:absolute;left:32px;top:324px;"><defs><clipPath id="sa1"><circle cx="14" cy="14" r="13.2"/></clipPath></defs><circle cx="14" cy="14" r="14" fill="#ffffff"/><g clip-path="url(#sa1)"><rect width="28" height="28" fill="#ffffff"/><circle cx="9.5" cy="7.5" r="5.8" fill="#2a1a1a"/><circle cx="19" cy="7.5" r="5.8" fill="#2a1a1a"/><circle cx="14.5" cy="5.8" r="5.5" fill="#2a1a1a"/><circle cx="7" cy="13" r="4.8" fill="#2a1a1a"/><circle cx="22" cy="12.5" r="4.3" fill="#2a1a1a"/><circle cx="8.3" cy="16.8" r="3.6" fill="#2a1a1a"/><circle cx="21.6" cy="16.5" r="3.2" fill="#2a1a1a"/><rect x="12.3" y="17" width="4.6" height="5" fill="#cf9a76"/><path d="M5.5 28c0-5 2.5-7.2 5.5-7.8l3.6 1.3 3.6-1.3c3 .6 5.5 2.8 5.5 7.8z" fill="#dca983"/><path d="M8.6 28v-7l1.8-.8.9 2.6h6.6l.9-2.6 1.8.8v7z" fill="#f4595f"/><ellipse cx="14.7" cy="13" rx="5.9" ry="6.5" fill="#dba67f"/><path d="M11.3 11.3q1.1-.9 2.2 0M16.2 11.3q1.1-.9 2.2 0" stroke="#3a2620" stroke-width=".8" fill="none"/><circle cx="11.4" cy="12.9" r=".8" fill="#8fc7ea"/><path d="M12.3 15.2h4.8c0 2-1 3.2-2.4 3.2s-2.4-1.2-2.4-3.2z" fill="#4a2520"/><ellipse cx="14.7" cy="17" rx="1.4" ry="1.5" fill="#f0607a"/></g><circle cx="14" cy="14" r="13.5" fill="none" stroke="#e2e2e2" stroke-width="1"/></svg><span class="t " style="top:323px;font-size:10px;left:52.4px;color:#737373;letter-spacing:0.613px;">COLORIST</span><svg width="15" height="15" viewBox="0 0 24 24" fill="none" stroke="#404040" stroke-width="1.5" stroke-linecap="round" stroke-linejoin="round" style="position:absolute;left:200.5px;top:324.5px;color:#404040;"><path d="M19.8 9.16A8.3 8.3 0 1 1 17 5.35"/><path d="M17.7 2.8l.200 2.9-2.9.200"/></svg><svg width="11" height="11" viewBox="0 0 24 24" fill="none" stroke="#171717" stroke-width="1.5" stroke-linecap="round" stroke-linejoin="round" style="position:absolute;left:224.5px;top:326.5px;color:#171717;"><circle cx="4.5" cy="12" r="2" fill="currentColor" stroke="none"/><circle cx="12" cy="12" r="2" fill="currentColor" stroke="none"/><circle cx="19.5" cy="12" r="2" fill="currentColor" stroke="none"/></svg>
<svg width="16" height="16" viewBox="0 0 24 24" fill="none" stroke="#1cbdc8" stroke-width="1.75" stroke-linecap="round" stroke-linejoin="round" style="position:absolute;left:27px;top:358px;color:#1cbdc8;"><circle cx="12" cy="12" r="10"/><ellipse cx="12" cy="12" rx="3.7" ry="10"/><path d="M2.7 8.5h18.6M2.7 15.5h18.6"/></svg>
<span class="t m" style="top:356px;font-size:14px;left:51.3px;color:#0a0a0a;letter-spacing:0.469px;">B-Roll Library</span>
<svg width="14" height="14" viewBox="0 0 24 24" fill="none" stroke="#171717" stroke-width="1.5" stroke-linecap="round" stroke-linejoin="round" style="position:absolute;left:217px;top:359px;color:#171717;"><circle cx="4.5" cy="12" r="2" fill="currentColor" stroke="none"/><circle cx="12" cy="12" r="2" fill="currentColor" stroke="none"/><circle cx="19.5" cy="12" r="2" fill="currentColor" stroke="none"/></svg>
<svg width="10.5" height="10.5" viewBox="0 0 24 24" fill="none" stroke="#6b6b6b" stroke-width="1.8" stroke-linecap="round" stroke-linejoin="round" style="position:absolute;left:16.75px;top:402.75px;color:#6b6b6b;"><path d="M5 8.5l7 7 7-7"/></svg><svg width="16" height="16" viewBox="0 0 28 28" style="position:absolute;left:32px;top:400px;"><defs><clipPath id="sa2"><circle cx="14" cy="14" r="13.2"/></clipPath></defs><circle cx="14" cy="14" r="14" fill="#ffffff"/><g clip-path="url(#sa2)"><rect width="28" height="28" fill="#ffffff"/><ellipse cx="14.5" cy="6.6" rx="4.6" ry="3.2" fill="#e3e3e3"/><rect x="12" y="17" width="5" height="5" fill="#ef8424"/><path d="M5.5 28c0-5 2.5-7.2 5.8-7.7l3.2.7 3.2-.7c3.3.5 5.8 2.7 5.8 7.7z" fill="#8e8e8e"/><path d="M11.8 20.6l2.7.7 2.7-.7V28h-5.4z" fill="#ededed"/><ellipse cx="14.5" cy="12.8" rx="6" ry="7.3" fill="#f88b2d"/><circle cx="8.5" cy="13" r="1.3" fill="#f88b2d"/><circle cx="20.5" cy="13" r="1.3" fill="#f88b2d"/><path d="M10.3 9.4q1.3-.9 2.6-.2" stroke="#b55a12" stroke-width=".8" fill="none"/><circle cx="12" cy="11.6" r="1.25" fill="#fff"/><circle cx="17" cy="11.6" r="1.25" fill="#fff"/><circle cx="12.1" cy="11.7" r=".6" fill="#3d6fa8"/><circle cx="16.9" cy="11.7" r=".6" fill="#3d6fa8"/><rect x="11.4" y="14.6" width="6.2" height="2.3" rx="1.1" fill="#fff" stroke="#c2600f" stroke-width=".45"/></g><circle cx="14" cy="14" r="13.5" fill="none" stroke="#e2e2e2" stroke-width="1"/></svg><span class="t " style="top:399px;font-size:10px;left:52.4px;color:#737373;letter-spacing:0.708px;">SOUND DESIGN</span><svg width="15" height="15" viewBox="0 0 24 24" fill="none" stroke="#404040" stroke-width="1.5" stroke-linecap="round" stroke-linejoin="round" style="position:absolute;left:200.5px;top:400.5px;color:#404040;"><path d="M19.8 9.16A8.3 8.3 0 1 1 17 5.35"/><path d="M17.7 2.8l.200 2.9-2.9.200"/></svg><svg width="11" height="11" viewBox="0 0 24 24" fill="none" stroke="#171717" stroke-width="1.5" stroke-linecap="round" stroke-linejoin="round" style="position:absolute;left:224.5px;top:402.5px;color:#171717;"><circle cx="4.5" cy="12" r="2" fill="currentColor" stroke="none"/><circle cx="12" cy="12" r="2" fill="currentColor" stroke="none"/><circle cx="19.5" cy="12" r="2" fill="currentColor" stroke="none"/></svg>
<span class="t " style="top:425.5px;font-size:12px;left:24.4px;color:#737373;letter-spacing:0.224px;">No shared folders</span>
<svg width="10.5" height="10.5" viewBox="0 0 24 24" fill="none" stroke="#6b6b6b" stroke-width="1.8" stroke-linecap="round" stroke-linejoin="round" style="position:absolute;left:16.75px;top:466.75px;color:#6b6b6b;"><path d="M5 8.5l7 7 7-7"/></svg><svg width="16" height="16" viewBox="0 0 28 28" style="position:absolute;left:32px;top:464px;"><defs><clipPath id="sa3"><circle cx="14" cy="14" r="13.2"/></clipPath></defs><circle cx="14" cy="14" r="14" fill="#ffffff"/><g clip-path="url(#sa3)"><rect width="28" height="28" fill="#ffffff"/><rect x="11.6" y="16" width="4.8" height="7" fill="#ecc93a"/><path d="M4.5 28c0-5 2.6-7.4 6.5-7.9h6c3.9.5 6.5 2.9 6.5 7.9z" fill="#a5f7c0"/><ellipse cx="14" cy="13" rx="6" ry="7" fill="#f5d44a"/><circle cx="7.9" cy="12.5" r="1.1" fill="#f5d44a"/><circle cx="20.1" cy="12.5" r="1.1" fill="#f5d44a"/><path d="M7.9 10.5C7 4.2 9.8 1 14 1s7 3.2 5.8 9.5c-.7-2.6-2.5-3.7-5.8-3.7s-5.2 1-6.1 3.7z" fill="#b5612c"/><circle cx="11" cy="11.5" r="2.1" fill="#5a5230"/><circle cx="17" cy="11.5" r="2.1" fill="#5a5230"/><path d="M8 11.2h12" stroke="#8a7a38" stroke-width=".6"/><path d="M12.3 15.3h3.4v.9h-3.4z" fill="#3a2a14"/><rect x="12.5" y="15.9" width="3" height="4.3" rx="1.4" fill="#58b85c"/></g><circle cx="14" cy="14" r="13.5" fill="none" stroke="#e2e2e2" stroke-width="1"/></svg><span class="t " style="top:463px;font-size:10px;left:52.4px;color:#737373;letter-spacing:0.514px;">PRODUCER</span><svg width="15" height="15" viewBox="0 0 24 24" fill="none" stroke="#404040" stroke-width="1.5" stroke-linecap="round" stroke-linejoin="round" style="position:absolute;left:200.5px;top:464.5px;color:#404040;"><path d="M19.8 9.16A8.3 8.3 0 1 1 17 5.35"/><path d="M17.7 2.8l.200 2.9-2.9.200"/></svg><svg width="11" height="11" viewBox="0 0 24 24" fill="none" stroke="#171717" stroke-width="1.5" stroke-linecap="round" stroke-linejoin="round" style="position:absolute;left:224.5px;top:466.5px;color:#171717;"><circle cx="4.5" cy="12" r="2" fill="currentColor" stroke="none"/><circle cx="12" cy="12" r="2" fill="currentColor" stroke="none"/><circle cx="19.5" cy="12" r="2" fill="currentColor" stroke="none"/></svg>
<span class="t " style="top:489.5px;font-size:12px;left:24.4px;color:#737373;letter-spacing:0.224px;">No shared folders</span>
<svg width="10.5" height="10.5" viewBox="0 0 24 24" fill="none" stroke="#6b6b6b" stroke-width="1.8" stroke-linecap="round" stroke-linejoin="round" style="position:absolute;left:16.75px;top:530.75px;color:#6b6b6b;"><path d="M5 8.5l7 7 7-7"/></svg><svg width="16" height="16" viewBox="0 0 28 28" style="position:absolute;left:32px;top:528px;"><defs><clipPath id="sa4"><circle cx="14" cy="14" r="13.2"/></clipPath></defs><circle cx="14" cy="14" r="14" fill="#ffffff"/><g clip-path="url(#sa4)"><rect width="28" height="28" fill="#ffffff"/><ellipse cx="14" cy="4" rx="2.4" ry="2.9" fill="#9a4f22"/><rect x="11.8" y="17" width="4.4" height="5" fill="#2e1c14"/><path d="M4.5 28c0-5 2.8-7 6.2-7.5l3.3 1.4 3.3-1.4c3.4.5 6.2 2.5 6.2 7.5z" fill="#3b82f6"/><ellipse cx="14" cy="12.6" rx="5.7" ry="7" fill="#3a2418"/><path d="M8.3 11.2c0-4.3 2.5-6 5.7-6s5.7 1.7 5.7 6c-1.5-2-3.1-2.8-5.7-2.8s-4.2.8-5.7 2.8z" fill="#23130d"/></g><circle cx="14" cy="14" r="13.5" fill="none" stroke="#e2e2e2" stroke-width="1"/></svg><span class="t " style="top:527px;font-size:10px;left:52.4px;color:#737373;letter-spacing:0.678px;">VFX ARTIST</span><svg width="15" height="15" viewBox="0 0 24 24" fill="none" stroke="#404040" stroke-width="1.5" stroke-linecap="round" stroke-linejoin="round" style="position:absolute;left:200.5px;top:528.5px;color:#404040;"><path d="M19.8 9.16A8.3 8.3 0 1 1 17 5.35"/><path d="M17.7 2.8l.200 2.9-2.9.200"/></svg><svg width="11" height="11" viewBox="0 0 24 24" fill="none" stroke="#171717" stroke-width="1.5" stroke-linecap="round" stroke-linejoin="round" style="position:absolute;left:224.5px;top:530.5px;color:#171717;"><circle cx="4.5" cy="12" r="2" fill="currentColor" stroke="none"/><circle cx="12" cy="12" r="2" fill="currentColor" stroke="none"/><circle cx="19.5" cy="12" r="2" fill="currentColor" stroke="none"/></svg>
<span class="t " style="top:553.5px;font-size:12px;left:24.4px;color:#737373;letter-spacing:0.224px;">No shared folders</span>
<div class="circ" style="left:24px;top:742px;width:32px;height:32px;font-size:11px;line-height:30.5px">JR</div>
<span class="t m" style="top:740px;font-size:14px;left:68.2px;color:#0a0a0a;letter-spacing:0.37px;">Jordan Rivera</span>
<span class="t " style="top:758px;font-size:12px;left:69.2px;color:#737373;letter-spacing:0.252px;">jordan@studiopost.tv</span>
<svg width="15" height="15" viewBox="0 0 24 24" fill="none" stroke="#525252" stroke-width="1.3" stroke-linecap="round" stroke-linejoin="round" style="position:absolute;left:216.5px;top:750.5px;color:#525252;"><path d="M7 9.5l5-5 5 5M7 14.5l5 5 5-5"/></svg>
<div class="abs" style="left:15px;top:127px;width:194px;height:74px;border-radius:9px;background:#fff;border:1px solid #e6e6e6;box-shadow:0 4px 8px -2px rgba(0,0,0,.12),0 2px 4px -2px rgba(0,0,0,.08)"></div>
<svg width="17" height="17" viewBox="0 0 24 24" fill="none" stroke="#262626" stroke-width="1.35" stroke-linecap="round" stroke-linejoin="round" style="position:absolute;left:27.5px;top:139.5px;color:#262626;"><path d="M2.4 13L3.5 6.8C4 4.3 5.4 3.2 7.8 3.2H16.2C18.6 3.2 20 4.3 20.5 6.8L21.6 13V16.6C21.6 19.4 20.2 20.8 17.4 20.8H6.6C3.8 20.8 2.4 19.4 2.4 16.6Z"/><path d="M2.4 13H21.6"/><path d="M12.9 16.9h1.2M17.2 16.9h1.2" stroke-width="1.9"/></svg>
<span class="t " style="top:138.4px;font-size:14px;left:60.1px;color:#0a0a0a;letter-spacing:0.023px;">New Share</span>
<svg width="17" height="17" viewBox="0 0 24 24" fill="none" stroke="#262626" stroke-width="1.35" stroke-linecap="round" stroke-linejoin="round" style="position:absolute;left:27.5px;top:171.5px;color:#262626;"><circle cx="10.3" cy="8" r="5.2"/><path d="M2.5 20.3C3.3 16.6 6 14.3 10 14.2"/><path d="M17 13.2v7.6M13.2 17h7.6"/></svg>
<span class="t " style="top:170.4px;font-size:14px;left:60.1px;color:#0a0a0a;letter-spacing:0.415px;">New Contact</span>
</aside>
</div>
</body></html>
